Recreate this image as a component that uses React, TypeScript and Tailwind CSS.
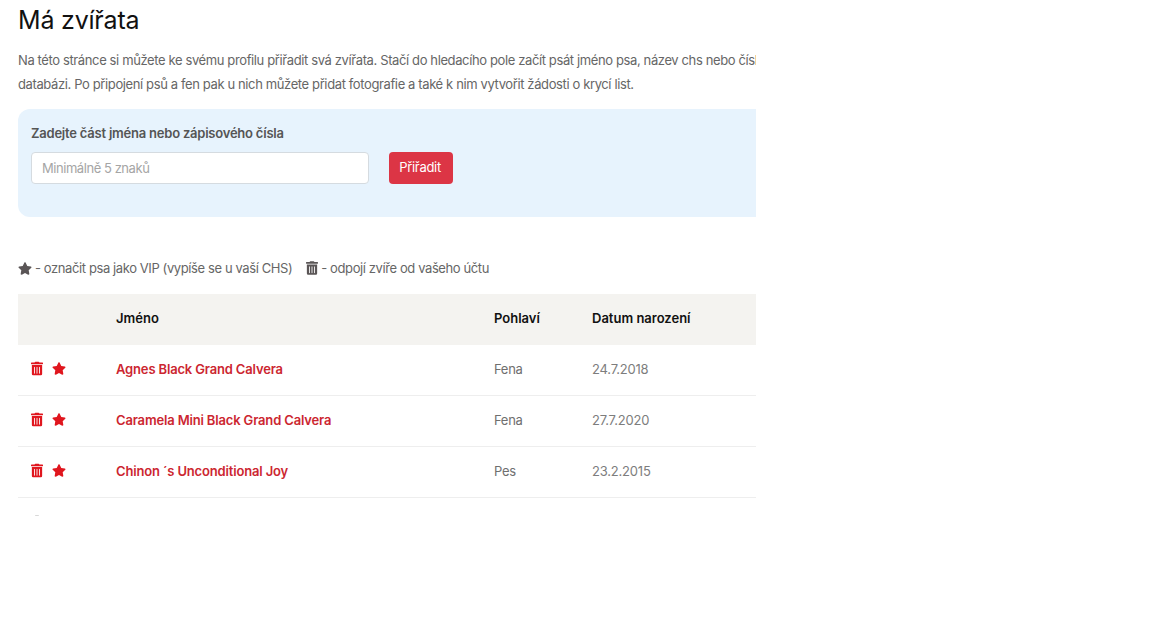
import { FaStar, FaTrashAlt } from "react-icons/fa"

const dogs = [
  { name: "Agnes Black Grand Calvera", sex: "Fena", born: "24.7.2018" },
  { name: "Caramela Mini Black Grand Calvera", sex: "Fena", born: "27.7.2020" },
  { name: "Chinon ´s Unconditional Joy", sex: "Pes", born: "23.2.2015" },
]

export default function App() {
  return (
    <main className="min-h-screen bg-white font-['Inter',sans-serif] text-[#6f6f6f]">
      <div className="ml-[18px] h-[516px] w-[738px] overflow-hidden">
        {/* Header */}
        <h1 className="text-[25px] leading-[40px] tracking-[-0.2px] text-[#111]">Má zvířata</h1>
        <p className="mt-[8px] whitespace-nowrap text-[13px] leading-[24px] tracking-[-0.38px] text-[#666]">
          Na této stránce si můžete ke svému profilu přiřadit svá zvířata. Stačí do hledacího pole začít psát jméno psa, název chs nebo číslo
          <br />
          databázi. Po připojení psů a fen pak u nich můžete přidat fotografie a také k nim vytvořit žádosti o krycí list.
        </p>

        {/* Search box */}
        <div className="mt-[13px] h-[108px] rounded-l-[12px] bg-[#e7f3fd] px-[13px] pt-[15px]">
          <label className="block text-[13px] font-semibold leading-[18px] tracking-[-0.22px] text-[#555]">Zadejte část jména nebo zápisového čísla</label>
          <div className="mt-[10px] flex items-center gap-[20px]">
            <input
              placeholder="Minimálně 5 znaků"
              className="h-[32px] w-[338px] rounded-[4px] border border-[#d5dbe0] bg-white px-[10px] text-[13px] tracking-[-0.45px] placeholder:text-[#a5a5a5]"
            />
            <button className="h-[32px] w-[64px] rounded-[4px] bg-[#dc3545] pr-[2px] text-[13px] tracking-[-0.3px] text-white">Přiřadit</button>
          </div>
        </div>

        {/* Legend */}
        <div className="mt-[41px] flex items-center whitespace-nowrap text-[13px] leading-[20px] tracking-[-0.4px] text-[#666]">
          <FaStar className="mr-[3px] h-[13px] w-[14px] text-[#5a5556]" />
          <span>- označit psa jako VIP (vypíše se u vaší CHS)</span>
          <FaTrashAlt className="ml-[14px] mr-[3px] h-[14px] w-[12px] text-[#5a5556]" />
          <span>- odpojí zvíře od vašeho účtu</span>
        </div>

        {/* Table */}
        <table className="mt-[16px] w-full table-fixed border-separate border-spacing-0 text-left text-[13px]">
          <colgroup>
            <col className="w-[98px]" />
            <col className="w-[378px]" />
            <col className="w-[98px]" />
            <col />
          </colgroup>
          <thead className="text-[#111]">
            <tr className="h-[51px] bg-[#f4f3f0]">
              <th />
              <th className="pb-[2px] font-semibold">Jméno</th>
              <th className="pb-[2px] font-semibold">Pohlaví</th>
              <th className="pb-[2px] font-semibold">Datum narození</th>
            </tr>
          </thead>
          <tbody>
            {dogs.map((dog) => (
              <tr key={dog.name} className="h-[51px]">
                <td className="border-b border-[#eeeeee] pb-[4px] pl-[13px]">
                  <div className="flex items-center gap-[9px] text-[#e0161e]">
                    <FaTrashAlt className="h-[15px] w-[12px]" />
                    <FaStar className="h-[13px] w-[14px]" />
                  </div>
                </td>
                <td className="border-b border-[#eeeeee] font-semibold tracking-[-0.16px] text-[#cc2630]">{dog.name}</td>
                <td className="border-b border-[#eeeeee] tracking-[-0.3px]">{dog.sex}</td>
                <td className="border-b border-[#eeeeee] tracking-[-0.2px] text-[#7d7d7d]">{dog.born}</td>
              </tr>
            ))}
            <tr className="h-[51px]">
              <td className="pl-[13px] pt-[17px] align-top">
                <div className="flex items-center gap-[9px] text-[#666]">
                  <FaTrashAlt className="h-[15px] w-[12px]" />
                  <FaStar className="h-[13px] w-[14px]" />
                </div>
              </td>
              <td />
              <td />
              <td />
            </tr>
          </tbody>
        </table>
      </div>
    </main>
  )
}
